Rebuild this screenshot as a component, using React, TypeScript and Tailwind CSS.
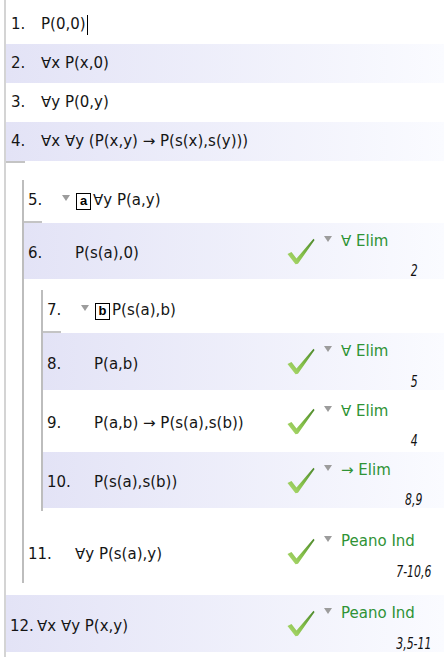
import React from "react";

const FONT = "font-['DejaVu_Sans',sans-serif]";

function Check() {
  return (
    <svg width="28" height="27" viewBox="0 0 28 27" className="shrink-0">
      <defs>
        <linearGradient id="cg" x1="0" y1="1" x2="1" y2="0">
          <stop offset="0" stopColor="#b2dc74" />
          <stop offset="0.45" stopColor="#86c04a" />
          <stop offset="1" stopColor="#4a862a" />
        </linearGradient>
      </defs>
      <path d="M0.5 16 L4.5 14 L9.5 20.5 L26.5 0.8 L27.6 2 L11 25.8 L8.5 26.2 Z" fill="url(#cg)" />
    </svg>
  );
}

function Tri({ className = "" }: { className?: string }) {
  return (
    <svg width="8" height="6" viewBox="0 0 8 6" className={"shrink-0 " + className}>
      <polygon points="0,0 8,0 4,6" fill="#9c9c9c" />
    </svg>
  );
}

function Box({ c }: { c: string }) {
  return (
    <span className="inline-flex h-[17px] w-[15px] shrink-0 items-center justify-center border-[1.5px] border-black bg-white pb-[1px] font-['Liberation_Sans',sans-serif] text-[13px] font-bold leading-none text-black">
      {c}
    </span>
  );
}

function Rule({ name, refs }: { name: string; refs: string }) {
  return (
    <div className="ml-auto flex w-[157px] shrink-0 items-center self-stretch">
      <Check />
      <div className="mt-[10px] flex flex-col">
        <div className="flex h-[20px] items-center">
          <Tri className="mb-[5px] ml-[9px]" />
          <span className="ml-[9px] text-[15px] text-[#2f9336]">{name}</span>
        </div>
        <div className="mt-[10px] ml-[59px] flex h-[20px] w-[80px] items-center justify-center text-[16px] italic text-[#111]">
          <span className="inline-block scale-x-[0.68]">{refs}</span>
        </div>
      </div>
    </div>
  );
}

const BG = "bg-linear-to-r from-[#e3e3f6] to-[#fafbff]";

export default function App() {
  return (
    <div className={"min-h-[663px] w-[444px] bg-white text-[15px] text-[#151515] " + FONT}>
      <div className="ml-[4px] border-l-2 border-[#d4d4d4] pt-[5px] pb-[5px]">
        <div className="flex h-[39px] items-center pl-[5px]">
          <span className="w-[30px]">1.</span>
          <span>P(0,0)</span>
          <span className="ml-[1px] h-[20px] w-[1px] bg-black" />
        </div>
        <div className={"flex h-[39px] items-center pl-[5px] " + BG}>
          <span className="w-[30px]">2.</span>
          <span>∀x P(x,0)</span>
        </div>
        <div className="flex h-[39px] items-center pl-[5px]">
          <span className="w-[30px]">3.</span>
          <span>∀y P(0,y)</span>
        </div>
        <div className={"flex h-[39px] items-center pl-[5px] " + BG}>
          <span className="w-[30px]">4.</span>
          <span>∀x ∀y (P(x,y) → P(s(x),s(y)))</span>
        </div>
        <div className="h-[2px] w-[19px] bg-[#c4c4c4]" />

        <div className="mt-[17px] ml-[16px] border-l-2 border-[#bdbdbd] pb-[3px]">
          <div className="flex h-[41px] items-center pl-[4px]">
            <span className="w-[34px]">5.</span>
            <Tri className="mb-[5px]" />
            <span className="ml-[6px]"><Box c="a" /></span>
            <span className="ml-[2px]">∀y P(a,y)</span>
          </div>
          <div className="h-[2px] w-[18px] bg-[#c4c4c4]" />
          <div className={"flex h-[56px] items-center pl-[4px] " + BG}>
            <span className="w-[47px] pt-[5px]">6.</span>
            <span className="pt-[5px]">P(s(a),0)</span>
            <Rule name="∀ Elim" refs="2" />
          </div>

          <div className="mt-[11px] ml-[17px] border-l-2 border-[#bdbdbd] pb-[3px]">
            <div className="flex h-[41px] items-center pl-[4px]">
              <span className="w-[34px]">7.</span>
              <Tri className="mb-[5px]" />
              <span className="ml-[6px]"><Box c="b" /></span>
              <span className="ml-[2px]">P(s(a),b)</span>
            </div>
            <div className="h-[2px] w-[18px] bg-[#c4c4c4]" />
            <div className={"flex h-[57px] items-center pl-[4px] " + BG}>
              <span className="w-[47px] pt-[5px]">8.</span>
              <span className="pt-[5px]">P(a,b)</span>
              <Rule name="∀ Elim" refs="5" />
            </div>
            <div className="flex h-[62px] items-center pl-[4px]">
              <span className="w-[47px] pt-[5px]">9.</span>
              <span className="pt-[5px]">P(a,b) → P(s(a),s(b))</span>
              <Rule name="∀ Elim" refs="4" />
            </div>
            <div className={"flex h-[56px] items-center pl-[4px] " + BG}>
              <span className="w-[47px] pt-[5px]">10.</span>
              <span className="pt-[5px]">P(s(a),s(b))</span>
              <Rule name="→ Elim" refs="8,9" />
            </div>
          </div>

          <div className="mt-[12px] flex h-[57px] items-center pl-[4px]">
            <span className="w-[47px] pt-[5px]">11.</span>
            <span className="pt-[5px]">∀y P(s(a),y)</span>
            <Rule name="Peano Ind" refs="7-10,6" />
          </div>
        </div>

        <div className={"mt-[12px] flex h-[57px] items-center pl-[4px] " + BG}>
          <span className="w-[27px] pt-[5px]">12.</span>
          <span className="pt-[5px]">∀x ∀y P(x,y)</span>
          <Rule name="Peano Ind" refs="3,5-11" />
        </div>
      </div>
    </div>
  );
}
